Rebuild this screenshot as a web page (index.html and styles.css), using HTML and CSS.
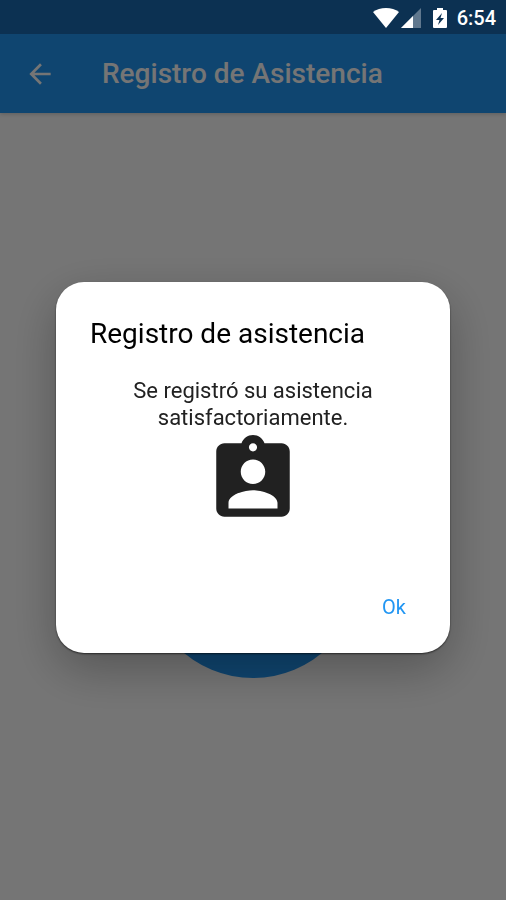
FILE: index.html
```html
<!DOCTYPE html>
<html lang="es">
<head>
    <meta charset="UTF-8">
    <meta name="viewport" content="width=device-width, initial-scale=1.0">
    <title>Registro de Asistencia</title>
    <link rel="stylesheet" href="styles.css">
</head>
<body>

    <div class="status-bar">
        <svg class="wifi" viewBox="0 0 26 20" aria-hidden="true">
            <path d="M13 20L0 4C3.500 1.200 8 0 13 0s9.500 1.200 13 4z"/>
        </svg>
        <svg class="signal" viewBox="0 0 20 20" aria-hidden="true">
            <path class="signal-off" d="M20 0v20H0z"/>
            <path d="M12 8v12H0z"/>
        </svg>
        <svg class="battery" viewBox="0 0 14 20" aria-hidden="true">
            <path fill-rule="evenodd" d="M4 0h6v2h3a1 1 0 0 1 1 1v16a1 1 0 0 1-1 1H1a1 1 0 0 1-1-1V3a1 1 0 0 1 1-1h3zM9 5l-6 7h3.500L5 17l6-7H7.500z"/>
        </svg>
        <span class="clock">6:54</span>
    </div>

    <header class="app-bar">
        <button class="back" type="button" aria-label="Volver">
            <svg viewBox="0 0 24 24" aria-hidden="true">
                <path d="M20 11H7.830l5.590-5.590L12 4l-8 8 8 8 1.410-1.410L7.830 13H20v-2z"/>
            </svg>
        </button>
        <h1>Registro de Asistencia</h1>
    </header>

    <main>
        <button class="register" type="button" aria-label="Registrar"></button>
    </main>

    <div class="backdrop">
        <div class="dialog" role="dialog" aria-modal="true" aria-labelledby="dialog-title">
            <h2 id="dialog-title">Registro de asistencia</h2>
            <div class="content">
                <p>Se registró su asistencia satisfactoriamente.</p>
                <svg viewBox="0 0 24 24" aria-hidden="true">
                    <path d="M19 3h-4.180C14.400 1.840 13.300 1 12 1c-1.300 0-2.400.84-2.820 2H5c-1.100 0-2 .9-2 2v14c0 1.100.9 2 2 2h14c1.100 0 2-.9 2-2V5c0-1.100-.9-2-2-2zm-7 0c.55 0 1 .45 1 1s-.45 1-1 1-1-.45-1-1 .45-1 1-1zm0 4c1.660 0 3 1.340 3 3s-1.340 3-3 3-3-1.340-3-3 1.340-3 3-3zm6 12H6v-1.400c0-2 4-3.100 6-3.100s6 1.100 6 3.100V19z"/>
                </svg>
            </div>
            <div class="actions">
                <button class="ok" type="button">Ok</button>
            </div>
        </div>
    </div>

</body>
</html>
```

FILE: styles.css
```css
* {
    margin: 0;
    padding: 0;
    box-sizing: border-box;
}
body {
    display: flex;
    flex-direction: column;
    min-height: 100vh;
    font-family: Roboto, sans-serif;
    background-color: #fefefe;
    color: #212121;
}
button {
    border: none;
    background: none;
    color: inherit;
    font-family: inherit;
    cursor: pointer;
}
svg {
    display: block;
    fill: currentColor;
}
.status-bar {
    display: flex;
    align-items: center;
    justify-content: flex-end;
    height: 34px;
    padding: 2px 10px 0;
    background-color: #0c3152;
    color: #fff;
    position: relative;
    z-index: 2;
}
.wifi {
    width: 26px;
    height: 20px;
}
.signal {
    width: 20px;
    height: 20px;
    margin-left: 2px;
}
.signal-off {
    opacity: 0.35;
}
.battery {
    width: 14px;
    height: 20px;
    margin-left: 12px;
}
.clock {
    margin-left: 10px;
    font-size: 20px;
    font-weight: 500;
    line-height: 32px;
}
.app-bar {
    display: flex;
    align-items: center;
    gap: 46px;
    height: 79px;
    padding: 1px 24px 0;
    background-color: #2196f3;
    color: #fff;
    box-shadow: 0 1px 4px rgba(0, 0, 0, 0.2);
}
.back svg {
    width: 32px;
    height: 32px;
}
.app-bar h1 {
    font-size: 28px;
    font-weight: 500;
    line-height: 36px;
}
main {
    flex: 1;
    padding-top: 349px;
}
.register {
    display: block;
    width: 216px;
    height: 216px;
    margin: 0 auto;
    border-radius: 50%;
    background-color: #2196f3;
}
.backdrop {
    display: flex;
    align-items: center;
    justify-content: center;
    position: fixed;
    inset: 34px 0 0;
    padding: 0 56px;
    background-color: rgba(0, 0, 0, 0.54);
}
.dialog {
    width: 100%;
    max-width: 480px;
    padding: 34px 34px 28px;
    border-radius: 28px;
    background-color: #fff;
    box-shadow: 0 1px 2px rgba(0, 0, 0, 0.6), 0 16px 48px rgba(0, 0, 0, 0.28);
}
.dialog h2 {
    margin-bottom: 25px;
    color: #000;
    font-size: 28px;
    font-weight: 400;
    line-height: 36px;
}
.content {
    display: flex;
    flex-direction: column;
    align-items: center;
    text-align: center;
}
.content p {
    font-size: 22px;
    line-height: 27px;
}
.content svg {
    width: 98px;
    height: 98px;
}
.actions {
    display: flex;
    justify-content: flex-end;
    margin-top: 60px;
}
.ok {
    padding: 0 10px;
    color: #2196f3;
    font-size: 20px;
    font-weight: 400;
    line-height: 36px;
}
```
